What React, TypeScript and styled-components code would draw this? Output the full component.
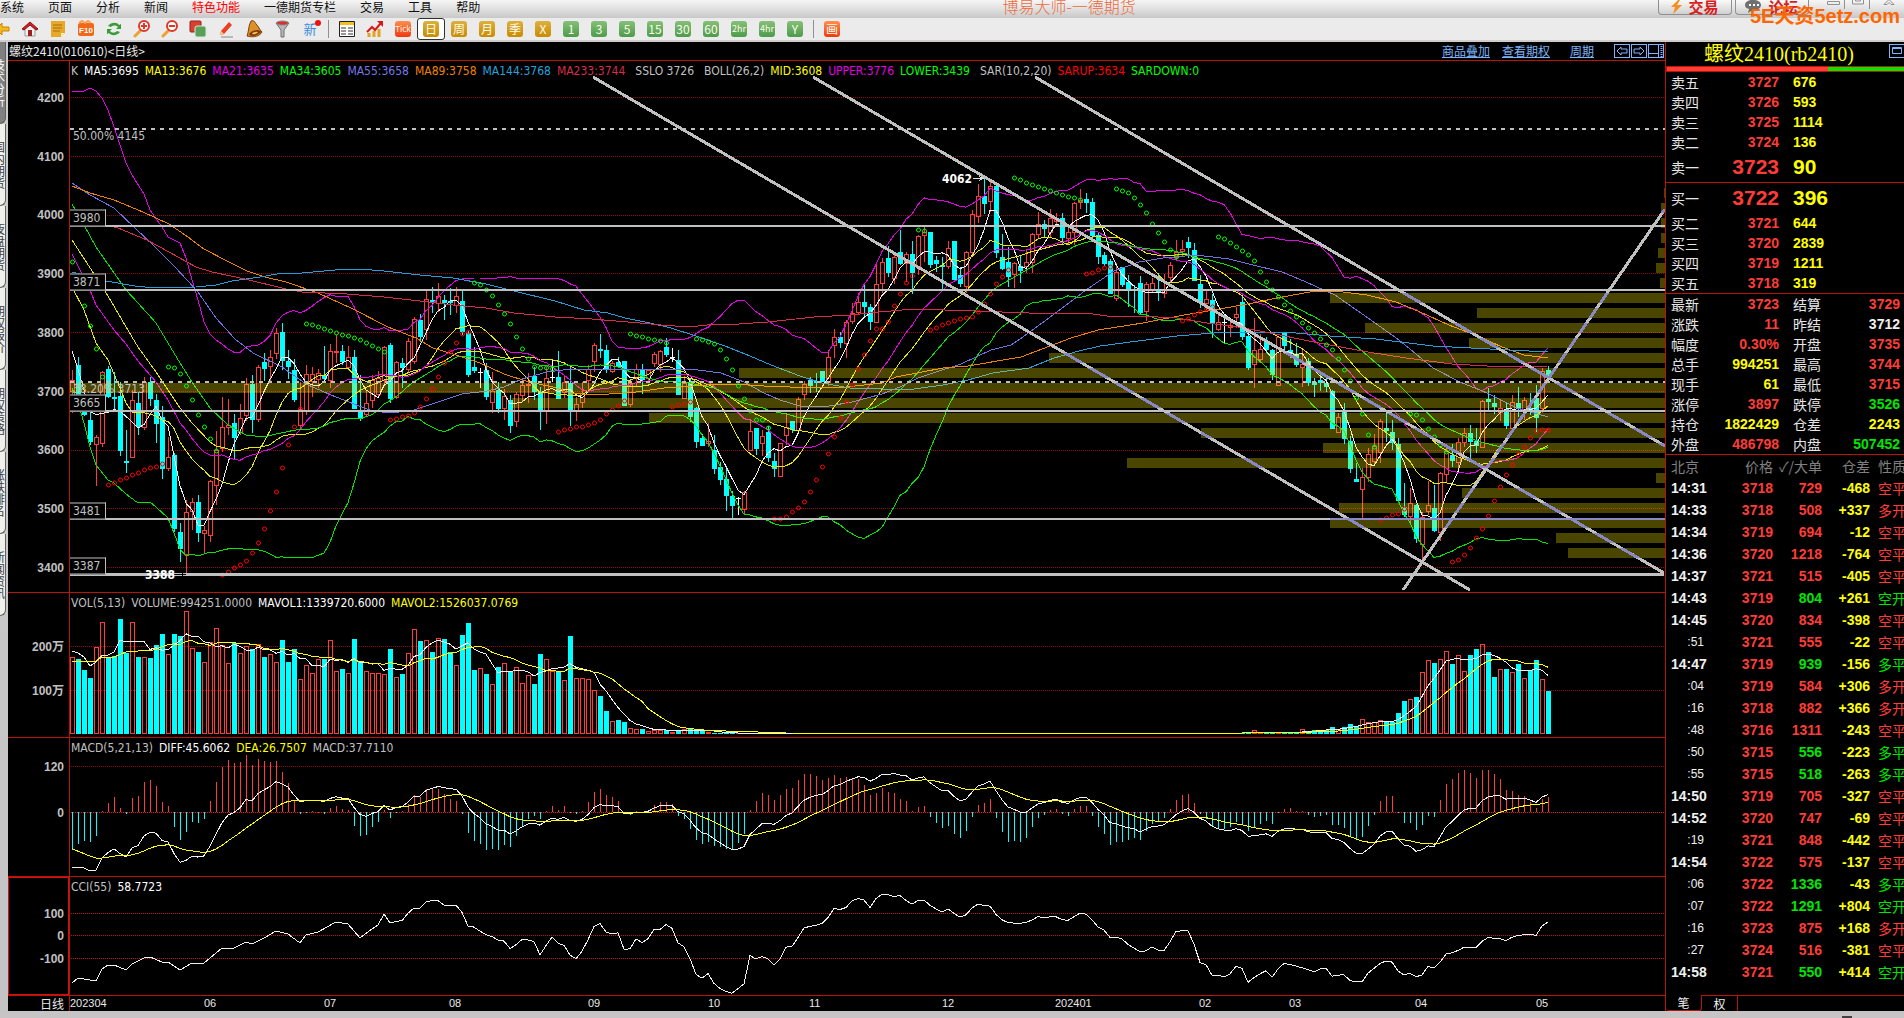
import React from "react";
import styled, { createGlobalStyle, css } from "styled-components";

/* ---------- palette and type ---------- */
const RED = "#ff3c38";
const LINE = "#b81408";
const YELLOW = "#ffff00";
const GREEN = "#00e600";
const SILVER = "#c0c0c0";
const CYAN = "#00ffff";
const MAGENTA = "#e600e6";
const CN = `"Noto Sans CJK SC", sans-serif`;
const CHART = `"DejaVu Sans Condensed", "DejaVu Sans", "Noto Sans CJK SC", sans-serif`;
const NUM = `"Liberation Sans", "Noto Sans CJK SC", sans-serif`;

const GlobalStyle = createGlobalStyle`
  * { box-sizing: border-box; }
  body { margin: 0; background: #000; overflow: hidden; }
  button { margin: 0; padding: 0; border: 0; background: none; font: inherit; color: inherit; }
`;

/* ---------- market data (vertical chart units) ---------- */
type Candle = { kind: string; high: number; top: number; bottom: number; low: number };

const RAW = `
r370,380,391,413 c357,365,400,404 c396,400,415,416 c412,420,442,445 r435,437,444,486 r371,372,443,447 c366,369,397,398 c372,397,399,412
c382,396,451,456 c430,461,463,473 r390,400,457,458 c392,403,427,435 r377,382,427,430 c377,382,399,406 c394,400,424,443 c406,417,469,479
r437,457,468,471 c453,455,529,532 c523,532,549,562 r500,512,554,573 r498,502,511,530 c495,502,533,542 r526,530,533,554 r480,481,535,542
r431,450,485,505 r397,427,448,452 r399,425,427,435 c414,423,438,459 r404,418,432,435 r378,384,415,421 c375,384,420,433 r365,367,419,422
c353,362,369,381 r350,357,366,381 r328,333,353,359 c323,332,361,370 c350,361,367,379 c359,370,400,402 r382,409,425,429 r365,374,411,415
r367,374,381,397 r369,373,379,388 c346,375,379,383 r344,351,380,388 r335,351,352,363 c345,351,362,365 r346,357,367,370 c350,357,409,409
c375,411,419,421 r390,403,414,416 r375,380,400,408 r371,378,394,396 r346,347,380,385 c343,345,399,403 r361,362,397,399 c358,363,368,388
r338,341,369,372 r317,319,361,364 c314,320,337,342 r290,299,329,340 c287,300,303,313 r283,296,303,312 c295,300,303,320 c288,301,303,315
r287,296,305,313 c290,301,332,335 c331,333,375,377 c347,367,371,373 w368,372,373,388 c363,370,397,400 r372,391,402,413 c382,390,409,413
r389,396,408,420 c395,400,426,433 r392,394,421,427 r380,385,395,401 r373,384,385,403 c367,376,392,400 c387,392,411,430 r367,378,410,424
w359,377,378,382 c351,377,399,399 r375,382,392,398 c365,383,411,426 r397,404,411,421 r382,393,402,408 r365,369,380,392 r343,345,361,372
c334,349,351,358 c345,350,369,373 r361,363,371,373 c357,362,367,368 c361,361,406,406 r379,383,404,407 r364,369,378,387 c364,369,380,394
r369,370,378,380 r352,354,363,367 r350,351,364,372 c338,347,355,357 w348,357,358,362 c350,360,395,395 r376,383,398,399 c378,382,417,422
c407,408,442,448 c434,438,446,446 r423,441,443,447 c435,450,469,474 c462,467,480,485 c466,479,496,511 c491,496,506,518 w497,498,499,515
r491,492,509,515 r419,431,450,451 c428,428,449,455 r430,436,443,456 c426,432,458,462 c453,461,469,477 r443,443,476,476 r413,427,435,445
c421,421,430,433 r397,399,430,431 r381,384,394,400 c377,380,386,393 c373,381,383,392 c371,371,382,382 r350,357,382,386 r329,337,345,358
c332,337,343,348 r320,322,343,358 r303,313,321,324 r293,302,312,315 c283,302,307,318 c304,307,322,330 r263,284,322,322 r258,262,283,293
c246,258,273,277 r253,257,278,284 c230,252,264,265 r252,254,263,282 c241,254,273,294 r235,236,267,275 r227,232,235,262 c232,232,265,268
c256,260,264,272 c257,265,267,290 r241,248,266,269 c241,241,280,282 c267,275,284,287 r251,252,286,293 r210,214,252,257 r184,196,216,223
c178,196,204,214 r182,186,201,212 c185,186,253,258 c234,257,269,270 c247,262,277,287 r262,263,274,288 c256,266,271,283 r250,262,266,273
r233,234,262,273 r212,224,234,238 c220,224,229,237 r209,218,232,237 r213,218,221,227 c213,218,238,244 r227,232,238,245 r202,203,232,245
r189,200,202,209 c193,199,203,213 c198,202,236,241 c233,235,257,264 c252,255,264,266 c259,261,294,294 r263,272,298,301 c267,267,285,287
c275,282,289,307 c285,289,291,313 c276,283,313,314 r282,284,311,321 r278,283,289,293 c273,289,292,301 r274,290,293,298 r262,265,277,283
r240,252,257,260 r240,249,251,257 c237,242,248,258 c243,250,281,281 c275,284,303,308 r289,299,303,310 c294,300,323,338 r313,322,329,331
w318,322,323,344 r320,325,327,337 r307,314,317,328 c293,302,337,340 c330,336,368,370 r318,350,364,388 r334,349,359,363 c337,342,350,353
c349,350,375,380 r337,337,385,385 c333,333,346,350 c339,350,353,358 c343,354,365,367 r350,364,367,387 c358,361,383,386 c378,382,385,397
c374,380,383,391 c377,383,387,392 c390,391,429,429 r413,417,432,433 c403,411,439,444 c436,441,469,473 c463,479,482,482 r468,477,489,520
r448,454,477,482 r434,446,461,466 r419,421,452,463 c413,428,431,442 c420,432,443,450 c438,444,501,503 c483,507,515,517 r488,503,516,523
c504,505,539,543 r512,517,544,563 r481,505,511,515 c485,508,531,532 r472,473,532,541 r448,451,474,483 c444,455,461,467 r438,442,462,470
r428,433,442,447 c425,433,442,460 c428,441,446,453 r400,401,447,448 c388,399,402,410 c395,403,407,414 r400,408,412,421 c403,409,426,429
r395,402,428,429 c387,403,409,417 r397,400,411,420 c393,408,411,415 c385,398,418,432 r368,371,408,413 c366,370,375,378`;

const candles: Candle[] = RAW.trim().split(/\s+/).map((t) => {
  const [high, top, bottom, low] = t.slice(1).split(",").map(Number);
  return { kind: t[0], high, top, bottom, low };
});
const closes = candles.map((c) => (c.kind === "r" ? c.top : c.bottom));
const cx = (i: number) => 72 + i * 6;

const VOL_HEAD = [
  77, 75, 64, 56, 87, 112, 76, 78, 115, 81, 112, 77, 77, 76, 89, 100, 80, 100, 98, 123, 86, 82, 72, 92, 106, 89, 71, 91, 81, 88, 85, 90, 77,
  80, 72, 94, 72, 85, 55, 69, 61, 75, 75, 94, 63, 65, 61, 95, 72, 63, 61, 61, 60, 85, 57, 60, 81, 105, 93, 94, 82, 96, 95, 82, 69, 99, 111, 64,
  66, 60, 50, 67, 71, 63, 67, 51, 59, 50, 80, 75, 63, 62, 54, 98, 56, 56, 55, 44, 38, 23, 13, 14, 12, 6, 5, 5, 3, 4, 4, 4, 2, 3, 5, 5, 4, 3, 2,
];
const VOL_TAIL = [
  2, 4, 1, 1, 1, 1, 2, 1, 1, 5, 3, 4, 4, 4, 7, 5, 7, 10, 8, 15, 12, 12, 14, 12, 12, 21, 33, 35, 37, 62, 74, 71, 75, 83, 70, 79, 63, 79, 85, 90,
  82, 57, 65, 65, 62, 70, 56, 64, 74, 55, 43,
];
const volumes = candles.map((_, i) =>
  i < VOL_HEAD.length ? VOL_HEAD[i] : i >= candles.length - VOL_TAIL.length ? VOL_TAIL[i - candles.length + VOL_TAIL.length] : 1
);

/* ---------- indicators ---------- */
const lerp = (knots: number[][], i: number) => {
  for (let k = 1; k < knots.length; k++) {
    const [a, ya] = knots[k - 1];
    const [b, yb] = knots[k];
    if (i <= b) return ya + ((yb - ya) * (i - a)) / (b - a);
  }
  return knots[knots.length - 1][1];
};
const mean = (a: number[]) => a.reduce((s, v) => s + v, 0) / a.length;
const windowed = (src: number[], n: number, head: number[][], f: (w: number[]) => number) =>
  src.map((_, i) => (i < n - 1 ? lerp(head, i) : f(src.slice(i - n + 1, i + 1))));
const deviation = (w: number[]) => {
  const m = mean(w);
  return Math.sqrt(mean(w.map((v) => (v - m) ** 2)));
};
const path = (ys: number[]) => ys.map((y, i) => `${cx(i)},${y.toFixed(1)}`).join(" ");

const ma5 = windowed(closes, 5, [[0, 351], [1, 369], [2, 390], [3, 411]], mean);
const ma13 = windowed(closes, 13, [[0, 287], [2, 310], [4, 343], [6, 360], [8, 388], [9, 403], [10, 412], [11, 413]], mean);
const ma21 = windowed(closes, 21, [[0, 254], [3, 290], [4, 305], [7, 330], [9, 344], [11, 361], [14, 382], [16, 400], [18, 423], [19, 430]], mean);
const ma34 = windowed(
  closes, 34,
  [[0, 204], [2, 225], [4, 247], [9, 290], [11, 303], [14, 323], [16, 343], [18, 363], [20, 382], [23, 408], [26, 425], [29, 435], [32, 437]],
  mean
);
const mid = windowed(
  closes, 26,
  [[0, 240], [4, 277], [6, 296], [10, 337], [11, 347], [14, 372], [16, 390], [18, 408], [20, 423], [23, 442], [24, 446]],
  mean
);
const upper = windowed(
  closes, 26,
  [[0, 91], [2, 91], [3, 88], [4, 91], [5, 98], [6, 110], [7, 127], [9, 163], [10, 175], [12, 194], [13, 210], [15, 227], [16, 237], [18, 243],
    [19, 258], [20, 280], [21, 300], [22, 322], [23, 334], [24, 340]],
  (w) => mean(w) - 2 * deviation(w)
);
const lower = windowed(
  closes, 26,
  [[0, 388], [1, 403], [2, 423], [3, 447], [4, 465], [6, 480], [7, 483], [9, 494], [11, 503], [13, 502], [14, 507], [16, 518], [17, 533],
    [18, 549], [19, 556], [20, 554], [21, 556], [23, 552], [24, 552]],
  (w) => mean(w) + 2 * deviation(w)
);
const MA55 =
  "72,183 90,195 114,208 135,228 155,247 175,267 198,292 216,318 235,339 253,353 282,367 306,384 331,395 354,404 372,411 392,413 414,410 438,402 462,394 487,391 504,387 522,379 547,372 571,369 600,369 667,369 690,369 721,373 744,382 764,393 780,400 800,406 829,406 852,402 882,394 900,387 918,378 936,372 961,364 991,350 1011,345 1020,339 1053,315 1086,290 1114,271 1139,262 1163,258 1196,255 1229,259 1253,265 1282,272 1306,282 1335,295 1368,318 1399,340 1433,368 1460,382 1487,393 1517,408 1548,417";
const MA89 =
  "72,186 90,193 114,200 143,212 169,224 188,237 204,249 229,262 247,271 265,277 286,282 318,293 351,308 388,327 416,338 433,348 456,355 480,363 504,374 529,382 553,387 571,393 595,395 636,392 664,388 707,385 732,384 764,386 816,388 846,387 882,383 896,377 943,368 968,366 1021,357 1050,346 1071,338 1098,330 1143,323 1184,315 1220,309 1253,303 1282,297 1310,292 1335,291 1367,295 1396,302 1420,312 1449,325 1480,337 1502,347 1524,355 1548,358";
const MA144 =
  "72,272 106,281 135,286 155,288 196,287 216,285 232,281 260,277 277,274 302,273 335,270 359,269 384,271 420,275 453,278 486,284 514,291 555,301 584,310 608,313 625,318 650,323 671,328 696,336 725,346 750,356 771,365 800,376 822,383 850,388 882,389 914,389 943,385 968,380 993,373 1029,368 1054,358 1079,351 1100,346 1138,341 1177,336 1226,332 1284,332 1330,336 1376,339 1433,346 1490,349 1548,352";
const MA233 =
  "72,215 102,224 118,228 147,240 169,252 196,267 212,272 245,279 286,289 302,292 347,294 384,297 420,301 453,305 486,308 514,313 555,317 592,319 640,323 661,325 689,327 707,325 739,324 768,322 814,317 850,315 879,312 914,309 975,311 1029,313 1086,313 1114,317 1138,316 1177,318 1207,323 1238,327 1265,332 1314,342 1368,352 1406,358 1452,364 1487,366 1506,367 1548,366";

const SAR: { from: number; up?: boolean; ys: number[] }[] = [
  { from: 0, ys: [262, 283, 306, 326, 349, 377] },
  { from: 6, up: true, ys: [485, 483, 480, 478, 475, 473, 470, 468, 467, 464] },
  { from: 16, ys: [367, 368, 374, 386, 400, 415, 427, 439, 451] },
  { from: 25, up: true, ys: [575, 572, 568, 565, 561, 553, 543, 529, 511, 492, 468, 445, 427, 409] },
  { from: 39, ys: [324, 325, 327, 329, 331, 333, 335, 336, 338, 340, 343, 346, 349, 352] },
  { from: 53, up: true, ys: [420, 419, 417, 416, 413, 407, 399, 389, 377, 363, 352, 343, 334, 332] },
  { from: 67, ys: [283, 285, 290, 296, 305, 314, 324, 337, 349, 359, 367, 368, 368, 369] },
  { from: 81, up: true, ys: [432, 430, 429, 427, 427, 425, 423, 420, 414, 410, 406, 401] },
  { from: 93, ys: [334, 336, 337, 339, 340, 341, 343] },
  { from: 100, up: true, ys: [407, 405, 404, 402] },
  { from: 104, ys: [339, 340, 342, 344, 350, 359, 370, 386, 399, 411, 420, 420, 428] },
  { from: 117, up: true, ys: [519, 519, 517, 512, 508, 502, 492, 480, 467, 454, 437, 418, 402, 385, 369, 355, 341, 329, 329, 322, 306, 294, 283, 276] },
  { from: 141, ys: [230, 231] },
  { from: 143, up: true, ys: [330, 328, 325, 323, 321, 319, 318, 317, 312, 304, 294, 284, 277, 270] },
  { from: 157, ys: [178, 180, 183, 185, 187, 189, 191, 193, 195, 197, 198, 200] },
  { from: 169, up: true, ys: [274, 273, 270, 268, 267] },
  { from: 174, ys: [189, 191, 193, 198, 205, 213, 224, 233, 242, 250, 257] },
  { from: 185, up: true, ys: [321, 319, 315, 312, 309, 307] },
  { from: 191, ys: [237, 239, 243, 247, 251, 255, 261, 272, 282, 290, 297, 305, 311, 317, 323, 328, 333, 339, 345, 350, 359, 370, 381, 398, 414, 435, 447] },
  { from: 218, up: true, ys: [520, 518, 515, 514, 509] },
  { from: 223, ys: [414, 415, 420, 429, 437, 445, 452] },
  { from: 230, up: true, ys: [562, 560, 555, 548, 538, 529, 516, 501, 487, 475, 465, 455, 447, 438, 431, 430, 430] },
];

const PROFILE = [
  [188, 1664], [203, 1661], [218, 1661], [233, 1661], [248, 1658], [263, 1656], [278, 1660], [293, 1330], [308, 1477], [323, 1365], [338, 1469],
  [353, 1049], [368, 739], [383, 70], [398, 512], [413, 649], [428, 1201], [443, 1323], [458, 1127], [473, 1656], [488, 1462], [503, 1339],
  [518, 1330], [533, 1556], [548, 1568],
];

const mavol1 = windowed(volumes, 5, [[0, 83], [1, 81], [2, 77], [3, 68]], mean).map((h) => 734 - h);
const mavol2 = windowed(volumes, 13, [[0, 73], [4, 73], [5, 77], [7, 77], [9, 82], [11, 83]], mean).map((h) => 734 - h);

const macd = (() => {
  let fast = 369, slow = 285, dea = -36;
  return closes.map((c, i) => {
    if (i > 0) {
      fast += (c - fast) / 3;
      slow += (c - slow) / 11;
    }
    const diff = (slow - fast) * 0.653;
    if (i > 0) dea += (diff - dea) / 7;
    return { diff, dea, bar: 2 * (diff - dea) };
  });
})();

const typical = candles.map((c, i) => (c.high + c.low + closes[i]) / 3);
const cci = windowed(
  typical, 55,
  [[0, 983], [1, 978], [4, 981], [5, 969], [6, 965], [7, 965], [9, 970], [10, 964], [12, 958], [13, 957], [15, 962], [16, 962], [18, 970],
    [20, 963], [22, 963], [23, 958], [25, 948], [27, 948], [29, 942], [30, 944], [32, 938], [34, 931], [36, 934], [38, 943], [39, 935],
    [41, 932], [44, 922], [46, 924], [48, 938], [50, 929], [51, 925], [52, 914], [53, 923]],
  (w) => {
    const m = mean(w);
    return 936 - (((m - w[w.length - 1]) / (0.015 * mean(w.map((v) => Math.abs(v - m))))) * 22.5) / 100;
  }
);

/* ---------- page frame ---------- */
const Page = styled.div`
  display: flex;
  flex-direction: column;
  height: 100vh;
  overflow: hidden;
  font: 12px ${CN};
  background: linear-gradient(#d0cccc, #c4c4c4);
`;
const TopBar = styled.header`
  display: flex;
  justify-content: space-between;
  height: 18px;
  background: linear-gradient(#f6f6f6, #e0e0e0 50%, #c8c8c8);
`;
const MenuList = styled.nav`
  display: flex;
  flex: none;
  gap: 24px;
`;
const MenuItem = styled.button<{ $hot?: boolean }>`
  height: 14px;
  font: 12px/14px ${CN};
  color: ${(p) => (p.$hot ? "#ff0000" : "#101010")};
`;
const AppTitle = styled.h1`
  flex: 1;
  margin: 0;
  font: 300 16px/12px ${CN};
  color: #ec6a3c;
  text-align: center;
`;
const WindowArea = styled.div`
  position: relative;
  display: flex;
  flex: none;
  gap: 3px;
  width: 246px;
`;
const PillButton = styled.button`
  display: flex;
  align-items: center;
  justify-content: center;
  gap: 6px;
  width: 74px;
  height: 15px;
  border: 1px solid #909090;
  border-top: 0;
  border-radius: 0 0 4px 4px;
  background: linear-gradient(#fafafa, #d0d0d0);
  font: bold 15px/10px ${CN};
  color: #d82020;
`;
const WindowControls = styled.div`
  display: flex;
  padding-left: 10px;
  svg { display: block; }
`;
const Watermark = styled.strong`
  position: absolute;
  z-index: 2;
  top: 6px;
  right: 4px;
  font: bold 20px/20px "Liberation Sans", ${CN};
  color: #ff6600;
  white-space: nowrap;
`;

const Tools = styled.div`
  display: flex;
  align-items: stretch;
  height: 24px;
  margin-left: -12px;
  background: #ebebeb;
  border-bottom: 2px solid #d0cccc;
`;
const Tool = styled.button<{ $active?: boolean }>`
  display: flex;
  align-items: center;
  justify-content: center;
  flex: none;
  width: 28px;
  height: 22px;
  ${(p) => p.$active && css`
    background: #fff;
    border: 1px solid #303030;
    border-radius: 3px;
  `}
`;
const TILES: Record<string, string> = {
  gold: "linear-gradient(#dcb040, #c88c00)",
  green: "linear-gradient(#86c078, #4c9c4c)",
  red: "linear-gradient(#ff9050, #f03810)",
};
const Tile = styled.span<{ $tone: string; $size?: number }>`
  width: 16px;
  height: 16px;
  border-radius: 3px;
  background: ${(p) => TILES[p.$tone]};
  color: #fffbe8;
  font: ${(p) => p.$size || 12}px/16px ${CN};
  text-align: center;
  white-space: nowrap;
`;
const ToolRule = styled.span`
  width: 1px;
  height: 18px;
  margin: 2px 4px 0;
  background: #909090;
`;
const NewMark = styled.span`
  position: relative;
  font: 13px/16px ${CN};
  color: #3c8ce0;
  &::after {
    content: "";
    position: absolute;
    top: -1px;
    right: -4px;
    width: 6px;
    height: 6px;
    border-radius: 50%;
    background: #f01010;
  }
`;

const Body = styled.div`
  display: flex;
  flex: 1;
  min-height: 0;
`;
const SideTabs = styled.nav`
  flex: none;
  width: 8px;
  padding-right: 2px;
  overflow: hidden;
`;
const SideTab = styled.button<{ $active?: boolean }>`
  display: flex;
  justify-content: flex-end;
  align-items: center;
  width: 6px;
  height: 82px;
  border-right: 1px solid #606060;
  border-bottom: 1px solid #606060;
  border-bottom-right-radius: 6px;
  background: ${(p) => (p.$active ? "#808080" : "#f0f0ec")};
  color: ${(p) => (p.$active ? "#fff" : "#404040")};
  font: 12px/12px ${CN};
  span { width: 12px; flex: none; word-break: break-all; }
`;

/* ---------- chart column ---------- */
const Charts = styled.main`
  display: grid;
  grid-template-rows: 19px 532fr 145fr 139fr 119fr 15px;
  flex: 1;
  min-width: 0;
  background: #000;
`;
const ChartHead = styled.div`
  display: flex;
  align-items: center;
  gap: 12px;
  padding: 0 1px;
  border-bottom: 1px solid ${LINE};
  color: #e8e8e8;
  line-height: 16px;
`;
const Symbol = styled.h2`
  flex: 1;
  margin: 0;
  font: 12px/16px ${CN};
`;
const HeadLink = styled.a<{ $apart?: boolean }>`
  margin-left: ${(p) => (p.$apart ? 8 : 0)}px;
  color: #7cb4f8;
  text-decoration: underline;
`;
const HeadButtons = styled.div`
  display: flex;
  gap: 1px;
  margin-left: 8px;
`;
const BoxButton = styled.button`
  width: 16px;
  height: 14px;
  border: 1px solid #80b4ff;
  svg { display: block; width: 14px; height: 12px; }
`;
const Pane = styled.section`
  display: grid;
  grid-template-columns: 62px 1fr;
  min-height: 0;
  border-bottom: 1px solid ${LINE};
`;
const Axis = styled.div<{ $selected?: boolean }>`
  position: relative;
  border-right: 1px solid ${LINE};
  ${(p) => p.$selected && css`box-shadow: inset 0 0 0 1px #d41010;`}
`;
const AxisLabel = styled.span`
  position: absolute;
  right: 5px;
  transform: translateY(-50%);
  font: bold 12px/14px ${NUM};
  color: ${SILVER};
`;
const Plot = styled.div`
  position: relative;
  min-width: 0;
  min-height: 0;
  overflow: hidden;
`;
const Drawing = styled.svg`
  position: absolute;
  inset: 0;
  display: block;
  width: 100%;
  height: 100%;
`;
const Legend = styled.div`
  position: absolute;
  top: 3px;
  left: 1px;
  display: flex;
  gap: 6px;
  font: 12px/14px ${CHART};
  white-space: nowrap;
`;
const Key = styled.span<{ $tone: string; $lead?: boolean }>`
  color: ${(p) => p.$tone};
  margin-left: ${(p) => (p.$lead ? 4 : 0)}px;
`;
const LevelTag = styled.span<{ $boxed?: boolean; $bright?: boolean }>`
  position: absolute;
  transform: translateY(-50%);
  font: 12px/15px ${CHART};
  color: ${(p) => (p.$bright ? "#fff" : SILVER)};
  font-weight: ${(p) => (p.$bright ? "bold" : "normal")};
  white-space: nowrap;
  ${(p) => p.$boxed && css`
    padding: 0 3px;
    width: 36px;
    border: 1px solid ${SILVER};
    border-left: 0;
    background: #000;
  `}
`;
const TimeRow = styled.div`
  display: grid;
  grid-template-columns: 62px 1fr;
  color: #e8e8e8;
  font: 11px/15px ${NUM};
`;
const Period = styled.span`
  padding-right: 5px;
  border-right: 1px solid ${LINE};
  font: 12px/15px ${CN};
  text-align: right;
`;
const Months = styled.div`
  position: relative;
`;
const Month = styled.span`
  position: absolute;
`;

/* ---------- quote panel ---------- */
const Quote = styled.aside`
  display: flex;
  flex-direction: column;
  flex: none;
  width: 239px;
  border-left: 1px solid ${LINE};
  background: #000;
  overflow: hidden;
`;
const QuoteHead = styled.div`
  display: flex;
  align-items: flex-start;
  justify-content: center;
  position: relative;
  height: 24px;
  padding-right: 12px;
`;
const QuoteTitle = styled.h2`
  margin: 0;
  font: 20px/24px "Liberation Serif", ${CN};
  color: ${YELLOW};
`;
const Corner = styled.div`
  position: absolute;
  right: -1px;
  top: 1px;
`;
const Strength = styled.div`
  display: flex;
  flex: none;
  height: 6px;
  border: solid ${LINE};
  border-width: 1px 0 1px 1px;
  background: ${GREEN};
  &::before { content: ""; width: 68%; background: ${RED}; }
`;
const Table = styled.table`
  width: 238px;
  table-layout: fixed;
  border-collapse: separate;
  border-spacing: 0;
  border-bottom: 1px solid ${LINE};
  font: bold 14px/18px ${NUM};
`;
const Row = styled.tr<{ $tall?: boolean }>`
  height: ${(p) => (p.$tall ? 30 : 20)}px;
  td { font-size: ${(p) => (p.$tall ? 21 : 14)}px; }
`;
const RowName = styled.th<{ $inset?: boolean }>`
  padding: 0 0 0 ${(p) => (p.$inset ? 14 : 5)}px;
  font: 14px/18px ${CN};
  color: #e6e6e6;
  text-align: left;
  white-space: nowrap;
`;
const Value = styled.td<{ $tone: string; $left?: boolean; $end?: boolean }>`
  padding: 0 ${(p) => (p.$end ? 4 : 0)}px 0 ${(p) => (p.$left ? 14 : 0)}px;
  color: ${(p) => p.$tone};
  text-align: ${(p) => (p.$left ? "left" : "right")};
`;
const Ticks = styled.table`
  width: 244px;
  table-layout: fixed;
  border-collapse: separate;
  border-spacing: 0;
  font: bold 14px/20px ${NUM};
  tr { height: 22px; }
  td, th { padding: 0; text-align: right; white-space: nowrap; }
  th { font: 14px/20px ${CN}; color: #808080; }
  td:first-child, th:first-child { padding-left: 5px; text-align: left; }
  td:last-child, th:last-child { padding-left: 8px; text-align: left; font: 14px/20px ${CN}; }
`;
const Cell = styled.td<{ $tone: string }>`
  color: ${(p) => p.$tone};
`;
const Seconds = styled.span`
  display: block;
  padding-right: 6px;
  font: 12px/20px ${NUM};
  text-align: right;
`;
const BottomTabs = styled.div`
  display: flex;
  flex: none;
  height: 16px;
  margin-top: auto;
`;
const BottomTab = styled.button<{ $active?: boolean }>`
  width: 36px;
  border: 1px solid ${LINE};
  border-width: ${(p) => (p.$active ? "0 1px 1px 0" : "1px 1px 0 0")};
  border-radius: ${(p) => (p.$active ? "0 0 3px 3px" : "0")};
  font: 12px/14px ${CN};
  color: #f0f0f0;
`;
const BottomRest = styled.span`
  flex: 1;
  border-top: 1px solid ${LINE};
`;
const StatusBar = styled.footer`
  display: flex;
  flex: none;
  justify-content: flex-end;
  align-items: flex-end;
  height: 7px;
  padding-right: 52px;
  background: #c6c4c4;
  &::after { content: ""; width: 10px; height: 2px; background: #404040; }
`;

/* ---------- content ---------- */
const MENU = ["系统", "页面", "分析", "新闻", "特色功能", "一德期货专栏", "交易", "工具", "帮助"];
const SIDE = ["技术分析", "国内期货", "夜盘期货", "期权报价", "期权策略", "涨跌排名", "新闻资讯"];
const PERIODS: [string, string, number?][] = [
  ["周", "gold"], ["月", "gold"], ["季", "gold"], ["X", "gold"], ["1", "green"], ["3", "green"], ["5", "green"], ["15", "green"],
  ["30", "green"], ["60", "green"], ["2hr", "green", 9], ["4hr", "green", 9], ["Y", "green"],
];
const LEGEND: [string, string, boolean?][] = [
  ["K", SILVER], ["MA5:3695", "#fff"], ["MA13:3676", YELLOW], ["MA21:3635", MAGENTA], ["MA34:3605", "#00ff00"], ["MA55:3658", "#7878e8"],
  ["MA89:3758", "#f08000"], ["MA144:3768", "#28a0dc"], ["MA233:3744", "#d82c4c"], ["SSLO 3726", SILVER, true], ["BOLL(26,2)", SILVER, true],
  ["MID:3608", YELLOW], ["UPPER:3776", MAGENTA], ["LOWER:3439", "#00ff00"], ["SAR(10,2,20)", SILVER, true], ["SARUP:3634", "#ff0000"],
  ["SARDOWN:0", "#00ff00"],
];
const MONTHS: [number, string][] = [
  [70, "202304"], [204, "06"], [324, "07"], [449, "08"], [588, "09"], [708, "10"], [809, "11"], [942, "12"], [1055, "202401"], [1199, "02"],
  [1289, "03"], [1415, "04"], [1536, "05"],
];
const ASKS = [["卖五", "3727", "676"], ["卖四", "3726", "593"], ["卖三", "3725", "1114"], ["卖二", "3724", "136"], ["卖一", "3723", "90"]];
const BIDS = [["买一", "3722", "396"], ["买二", "3721", "644"], ["买三", "3720", "2839"], ["买四", "3719", "1211"], ["买五", "3718", "319"]];
const STATS = [
  ["最新", "3723", RED, "结算", "3729", RED], ["涨跌", "11", RED, "昨结", "3712", "#f0f0f0"], ["幅度", "0.30%", RED, "开盘", "3735", RED],
  ["总手", "994251", YELLOW, "最高", "3744", RED], ["现手", "61", YELLOW, "最低", "3715", RED], ["涨停", "3897", RED, "跌停", "3526", GREEN],
  ["持仓", "1822429", YELLOW, "仓差", "2243", YELLOW], ["外盘", "486798", RED, "内盘", "507452", GREEN],
];
const TICKS = `14:31 3718 729 -468 空平|14:33 3718 508 +337 多开|14:34 3719 694 -12 空平|14:36 3720 1218 -764 空平|14:37 3721 515 -405 空平|14:43 3719 804 +261 空开 g|14:45 3720 834 -398 空平|:51 3721 555 -22 空平|14:47 3719 939 -156 多平 g|:04 3719 584 +306 多开|:16 3718 882 +366 多开|:48 3716 1311 -243 空平|:50 3715 556 -223 多平 g|:55 3715 518 -263 多平 g|14:50 3719 705 -327 空平|14:52 3720 747 -69 空平|:19 3721 848 -442 空平|14:54 3722 575 -137 空平|:06 3722 1336 -43 多平 g|:07 3722 1291 +804 空开 g|:16 3723 875 +168 多开|:27 3724 516 -381 空平|14:58 3721 550 +414 空开 g`
  .split("|").map((r) => r.split(" "));

const X0 = 70, W = 1595;
const pctX = (x: number) => `${((x - X0) / W) * 100}%`;

/* ---------- toolbar pictures ---------- */
const Glyph = ({ children }: { children: React.ReactNode }) => (
  <svg width="18" height="18" viewBox="0 0 18 18" fill="none" aria-hidden="true">{children}</svg>
);
const ICONS: [string, React.ReactNode][] = [
  ["后退", <path d="M3 9l6-6v4h7v4H9v4z" fill="#f4b81c" stroke="#c88400" />],
  ["首页", <><path d="M4 9v7h10V9" fill="#f2f2f2" stroke="#999" /><path d="M1 9l8-7 8 7-2 1-6-5-6 5z" fill="#d02020" stroke="#8c1010" /><path d="M7 10h4v6H7z" fill="#a02020" /></>],
  ["便笺", <><path d="M2 1h14v12l-4 4H2z" fill="#e8a828" /><path d="M4 5h9M4 8h9M4 11h7" stroke="#a86c08" /><path d="M12 17v-4h4z" fill="#fff0c0" /></>],
  ["F10", <><rect x="1" y="3" width="16" height="13" rx="2" fill="#f06818" /><path d="M2 3l3-2 3 2 3-2 3 2" stroke="#f8a050" strokeWidth="2" /><text x="9" y="13" fontSize="8" fontWeight="bold" fontFamily="Liberation Sans, sans-serif" textAnchor="middle" fill="#fff">F10</text></>],
  ["刷新", <path d="M3 6c3-4 9-4 11-1l2-1v5h-5l2-2c-2-2-5-2-7 0zM15 12c-3 4-9 4-11 1l-2 1V9h5l-2 2c2 2 5 2 7 0z" fill="#3a9c38" />],
  ["放大", <><path d="M7 11l-5 5" stroke="#f0a030" strokeWidth="3" strokeLinecap="round" /><circle cx="11" cy="6" r="5" fill="#fff" stroke="#e03828" strokeWidth="2" /><path d="M8 6h6M11 3v6" stroke="#e03828" strokeWidth="2" /></>],
  ["缩小", <><path d="M7 11l-5 5" stroke="#f0a030" strokeWidth="3" strokeLinecap="round" /><circle cx="11" cy="6" r="5" fill="#fff" stroke="#e03828" strokeWidth="2" /><path d="M8 6h6" stroke="#e03828" strokeWidth="2" /></>],
  ["窗口", <><rect x="1" y="1" width="11" height="11" rx="1" fill="#d84030" stroke="#982018" /><rect x="6" y="6" width="11" height="11" rx="2" fill="#58a058" stroke="#d8e8d8" /></>],
  ["画线", <><path d="M4 11l8-9 3 3-8 9-4 1z" fill="#e84020" /><path d="M4 11l3 3-4 1z" fill="#f8d090" /><path d="M4 17h12" stroke="#888" /></>],
  ["预警", <><path d="M6 1c3-1 4 1 5 3 3 3 3 5 6 8-2 4-8 6-15 4 2-5 1-9 4-15z" fill="#dc9028" stroke="#804008" /><ellipse cx="10" cy="13" rx="6" ry="2.500" transform="rotate(-16 10 13)" fill="#803808" /><ellipse cx="10" cy="13" rx="3" ry="1" transform="rotate(-16 10 13)" fill="#f0c060" /></>],
  ["筛选", <><path d="M3 3l5 7v7h3v-7l5-7z" fill="#b8b8b8" stroke="#707070" /><ellipse cx="9.500" cy="3" rx="6" ry="2" fill="#d83030" stroke="#888" /></>],
];

/* ---------- drawings ---------- */
const Grid = ({ ys, tone = "#900808" }: { ys: number[]; tone?: string }) => (
  <g stroke={tone} strokeDasharray="1 1">
    {ys.map((y) => <line key={y} x1="71" x2="1665" y1={y + 0.5} y2={y + 0.5} />)}
  </g>
);
const Curve = ({ pts, tone }: { pts: string; tone: string }) => <polyline points={pts} fill="none" stroke={tone} />;

const TRENDS = [[593, 77, 1470, 590], [813, 77, 1664, 573], [1035, 77, 1665, 446], [1403, 590, 1665, 209]];
const Trends = ({ tone }: { tone: string }) => (
  <g stroke={tone} strokeWidth="3">
    {TRENDS.map(([a, b, c, d]) => <line key={a} x1={a} y1={b} x2={c} y2={d} />)}
  </g>
);

function PriceDrawing() {
  return (
    <Drawing viewBox="70 61 1595 531" preserveAspectRatio="none" shapeRendering="crispEdges" role="img" aria-label="螺纹2410 日K线">
      <defs>
        <clipPath id="profile">
          {PROFILE.map(([y, x]) => <rect key={y} x={x} y={y} width={1665 - x} height="10" />)}
        </clipPath>
      </defs>
      <Grid ys={[97, 156, 215, 273, 332, 391, 450, 508, 567]} />
      {candles.map((c, i) => {
        const x = cx(i);
        if (c.kind === "r")
          return (
            <g key={i} stroke={RED} fill="none">
              <path d={`M${x + 0.5} ${c.high}V${c.top}M${x + 0.5} ${c.bottom}V${c.low}`} />
              <rect x={x - 1.5} y={c.top + 0.5} width="4" height={Math.max(1, c.bottom - c.top)} />
            </g>
          );
        const tone = c.kind === "w" ? "#fff" : CYAN;
        return (
          <g key={i} fill={tone}>
            <rect x={x} y={c.high} width="1" height={c.low - c.high} />
            <rect x={x - 2} y={c.top} width="5" height={Math.max(1, c.bottom - c.top)} />
          </g>
        );
      })}
      <Curve pts={path(ma5)} tone="#f0f0f0" />
      <Curve pts={path(ma13)} tone="#e8e800" />
      <Curve pts={path(mid)} tone="#e8e800" />
      <Curve pts={path(ma21)} tone={MAGENTA} />
      <Curve pts={path(upper)} tone={MAGENTA} />
      <Curve pts={path(ma34)} tone={GREEN} />
      <Curve pts={path(lower)} tone={GREEN} />
      <Curve pts={MA55} tone="#7070e0" />
      <Curve pts={MA89} tone="#f08000" />
      <Curve pts={MA144} tone="#289cd8" />
      <Curve pts={MA233} tone="#d82c4c" />
      {PROFILE.map(([y, x]) => <rect key={y} x={x} y={y} width={1665 - x} height="10" fill="#fff000" fillOpacity="0.29" />)}
      <g fill="none" shapeRendering="auto">
        {SAR.flatMap((run) =>
          run.ys.map((y, k) => <ellipse key={`${run.from}-${k}`} cx={cx(run.from + k) + 0.5} cy={y} rx="2" ry="2" stroke={run.up ? "#ff0000" : "#00ff00"} />)
        )}
      </g>
      <g stroke={SILVER} strokeWidth="2">
        {[226, 290, 411, 519].map((y) => <line key={y} x1="70" x2="1665" y1={y} y2={y} />)}
        <line x1="70" x2="1664" y1="574.500" y2="574.500" strokeWidth="3" />
        <path d="M70 129H1665M70 382H1665" strokeDasharray="4 5" />
      </g>
      <Trends tone={SILVER} />
      <g clipPath="url(#profile)">
        <Trends tone="#8888c4" />
        <line x1="1330" x2="1665" y1="519" y2="519" stroke="#8888c4" strokeWidth="2" />
      </g>
      <path d="M973 178.500H983M979 176.500L983 178.500L979 180.500" stroke="#e0e0e0" fill="none" />
      <path d="M174 574.500H186M182 571.500V577.500" stroke="#000" fill="none" />
    </Drawing>
  );
}

function VolumeDrawing() {
  return (
    <Drawing viewBox="70 593 1595 144" preserveAspectRatio="none" shapeRendering="crispEdges" role="img" aria-label="成交量">
      <Grid ys={[646, 690]} />
      {volumes.map((h, i) =>
        candles[i].kind === "c" || h < 2 ? (
          <rect key={i} x={cx(i) - 2} y={734 - h} width="5" height={h} fill={candles[i].kind === "c" ? CYAN : RED} />
        ) : (
          <rect key={i} x={cx(i) - 1.5} y={734.5 - h} width="4" height={h - 1} fill="none" stroke={RED} />
        )
      )}
      <Curve pts={path(mavol1)} tone="#f0f0f0" />
      <Curve pts={path(mavol2)} tone={YELLOW} />
    </Drawing>
  );
}

function MacdDrawing() {
  return (
    <Drawing viewBox="70 738 1595 138" preserveAspectRatio="none" shapeRendering="crispEdges" role="img" aria-label="MACD">
      <Grid ys={[766]} />
      <Grid ys={[812]} tone="#e01818" />
      {macd.map(({ bar }, i) => (
        <rect key={i} x={cx(i)} y={bar > 0 ? 812 - bar : 812} width="1" height={Math.max(1, Math.abs(bar))} fill={bar > 0 ? RED : CYAN} />
      ))}
      <Curve pts={path(macd.map((m) => 812.5 - m.diff))} tone="#f0f0f0" />
      <Curve pts={path(macd.map((m) => 812.5 - m.dea))} tone={YELLOW} />
    </Drawing>
  );
}

function CciDrawing() {
  return (
    <Drawing viewBox="70 877 1595 118" preserveAspectRatio="none" shapeRendering="crispEdges" role="img" aria-label="CCI">
      <Grid ys={[913, 935, 958]} tone="#c01414" />
      <Curve pts={path(cci)} tone="#f0f0f0" />
    </Drawing>
  );
}

type PaneProps = { top: number; height: number; labels: [number, string][]; selected?: boolean; children: React.ReactNode };
const ChartPane = ({ top, height, labels, selected, children }: PaneProps) => (
  <Pane>
    <Axis $selected={selected}>
      {labels.map(([y, t]) => <AxisLabel key={t} style={{ top: `${((y - top) / height) * 100}%` }}>{t}</AxisLabel>)}
    </Axis>
    <Plot>{children}</Plot>
  </Pane>
);
const tagAt = (x: number, y: number) => ({ left: pctX(x), top: `${((y - 61) / 531) * 100}%` });

const Book = ({ rows, best, label }: { rows: string[][]; best: number; label: string }) => (
  <Table aria-label={label}>
    <colgroup><col width="40" /><col width="73" /><col /></colgroup>
    <tbody>
      {rows.map(([name, price, lots], i) => (
        <Row key={name} $tall={i === best}>
          <RowName scope="row">{name}</RowName>
          <Value $tone={RED}>{price}</Value>
          <Value $tone={YELLOW} $left>{lots}</Value>
        </Row>
      ))}
    </tbody>
  </Table>
);

export default function App() {
  return (
    <Page>
      <GlobalStyle />
      <TopBar>
        <MenuList>
          {MENU.map((m) => <MenuItem key={m} $hot={m === "特色功能"}>{m}</MenuItem>)}
        </MenuList>
        <AppTitle>博易大师-一德期货</AppTitle>
        <WindowArea>
          <PillButton>
            <svg width="11" height="14" viewBox="0 0 11 14" aria-hidden="true"><path d="M7 0L0 7h4l-2 7 9-9H6l3-5z" fill="#f49020" /></svg>
            交易
          </PillButton>
          <PillButton>
            <svg width="17" height="14" viewBox="0 0 17 14" aria-hidden="true">
              <path d="M8 0c5 0 8 2 8 5s-3 5-8 5l-5 3 1-4C1 8 0 7 0 5c0-3 3-5 8-5z" fill="#707070" />
              <path d="M4 5h2M8 5h2M12 5h2" stroke="#fff" strokeWidth="2" />
            </svg>
            论坛
          </PillButton>
          <WindowControls>
            <svg width="78" height="9" viewBox="0 0 78 9" fill="none" stroke="#909090" aria-hidden="true">
              <path d="M5.500 1.500h12v3h-12zM22.500 0v9M30.500 -1v5h11v-5M33.500 -1v2h5v-2M47.500 0v9M62 4.500l5-5 5 5h-3l-2-2-2 2z" />
            </svg>
          </WindowControls>
          <Watermark>5E天资5etz.com</Watermark>
        </WindowArea>
      </TopBar>
      <Tools>
        {ICONS.map(([name, art]) => <Tool key={name} aria-label={name}><Glyph>{art}</Glyph></Tool>)}
        <Tool><NewMark>新</NewMark></Tool>
        <ToolRule />
        <Tool aria-label="报价">
          <Glyph>
            <path d="M1.500 1.500h15v15h-15z" fill="#fff" stroke="#202020" />
            <path d="M2 3.500h14" stroke="#f0c020" strokeWidth="3" />
            <path d="M3 8h5M10 8h5M3 11h5M10 11h5M3 14h5M10 14h5" stroke="#303030" />
          </Glyph>
        </Tool>
        <Tool aria-label="走势">
          <Glyph>
            <path d="M3 17v-4M8 17v-6M13 17V9" stroke="#e8a020" strokeWidth="3" />
            <path d="M1 12l5-5 3 3 6-7" stroke="#d81818" strokeWidth="2" />
            <path d="M11 1h6v6z" fill="#d81818" />
          </Glyph>
        </Tool>
        <Tool><Tile $tone="red" $size={8}>Tick</Tile></Tool>
        <Tool $active aria-pressed="true"><Tile $tone="gold">日</Tile></Tool>
        {PERIODS.map(([t, tone, size]) => <Tool key={t}><Tile $tone={tone} $size={size}>{t}</Tile></Tool>)}
        <ToolRule />
        <Tool><Tile $tone="red">画</Tile></Tool>
      </Tools>
      <Body>
        <SideTabs>
          {SIDE.map((s, i) => <SideTab key={s} $active={i === 0}><span>{s}</span></SideTab>)}
        </SideTabs>
        <Charts>
          <ChartHead>
            <Symbol>螺纹2410(010610)&lt;日线&gt;</Symbol>
            <HeadLink href="#overlay">商品叠加</HeadLink>
            <HeadLink href="#options">查看期权</HeadLink>
            <HeadLink href="#period" $apart>周期</HeadLink>
            <HeadButtons>
              <BoxButton aria-label="向左"><svg viewBox="0 0 14 12" fill="none" stroke="#80b4ff"><path d="M2 6l4-4v2h6v4H6v2z" /></svg></BoxButton>
              <BoxButton aria-label="向右"><svg viewBox="0 0 14 12" fill="none" stroke="#80b4ff"><path d="M12 6l-4-4v2H2v4h6v2z" /></svg></BoxButton>
              <BoxButton aria-label="分栏"><svg viewBox="0 0 14 12" fill="none" stroke="#80b4ff"><path d="M0 8.500h9M9.500 0v12" /><path d="M12.500 1v11" strokeDasharray="1 1" strokeWidth="2" /></svg></BoxButton>
            </HeadButtons>
          </ChartHead>

          <ChartPane top={61} height={531} labels={[4200, 4100, 4000, 3900, 3800, 3700, 3600, 3500, 3400].map((p, i) => [98 + Math.round(i * 58.72), String(p)] as [number, string])}>
            <PriceDrawing />
            <Legend>{LEGEND.map(([t, c, lead]) => <Key key={t} $tone={c} $lead={lead}>{t}</Key>)}</Legend>
            <LevelTag style={tagAt(73, 136)}>50.00% 4145</LevelTag>
            <LevelTag style={tagAt(73, 389)}>38.20% 3713</LevelTag>
            <LevelTag $boxed style={tagAt(70, 218)}>3980</LevelTag>
            <LevelTag $boxed style={tagAt(70, 282)}>3871</LevelTag>
            <LevelTag $boxed style={tagAt(70, 403)}>3665</LevelTag>
            <LevelTag $boxed style={tagAt(70, 511)}>3481</LevelTag>
            <LevelTag $boxed style={tagAt(70, 566)}>3387</LevelTag>
            <LevelTag $bright style={tagAt(942, 179)}>4062</LevelTag>
            <LevelTag $bright style={tagAt(145, 575)}>3388</LevelTag>
          </ChartPane>

          <ChartPane top={593} height={144} labels={[[647, "200万"], [691, "100万"]]}>
            <VolumeDrawing />
            <Legend>
              <Key $tone={SILVER}>VOL(5,13)</Key><Key $tone={SILVER}>VOLUME:994251.0000</Key>
              <Key $tone="#fff">MAVOL1:1339720.6000</Key><Key $tone={YELLOW}>MAVOL2:1526037.0769</Key>
            </Legend>
          </ChartPane>

          <ChartPane top={738} height={138} labels={[[767, "120"], [813, "0"]]}>
            <MacdDrawing />
            <Legend>
              <Key $tone={SILVER}>MACD(5,21,13)</Key><Key $tone="#fff">DIFF:45.6062</Key>
              <Key $tone={YELLOW}>DEA:26.7507</Key><Key $tone={SILVER}>MACD:37.7110</Key>
            </Legend>
          </ChartPane>

          <ChartPane top={877} height={118} labels={[[914, "100"], [936, "0"], [959, "-100"]]} selected>
            <CciDrawing />
            <Legend><Key $tone={SILVER}>CCI(55)</Key><Key $tone="#fff">58.7723</Key></Legend>
          </ChartPane>

          <TimeRow>
            <Period>日线</Period>
            <Months>{MONTHS.map(([x, t]) => <Month key={x} style={{ left: pctX(x) }}>{t}</Month>)}</Months>
          </TimeRow>
        </Charts>

        <Quote>
          <QuoteHead>
            <QuoteTitle>螺纹2410(rb2410)</QuoteTitle>
            <Corner>
              <BoxButton aria-label="最大化"><svg viewBox="0 0 14 12" fill="none" stroke="#80b4ff"><path d="M2.500 2.500h9v6h-9zM2 3.500h10" /></svg></BoxButton>
            </Corner>
          </QuoteHead>
          <Strength />
          <Book rows={ASKS} best={4} label="卖盘" />
          <Book rows={BIDS} best={0} label="买盘" />
          <Table aria-label="行情统计">
            <colgroup><col width="40" /><col width="73" /><col width="56" /><col /></colgroup>
            <tbody>
              {STATS.map(([a, av, ac, b, bv, bc]) => (
                <Row key={a}>
                  <RowName scope="row">{a}</RowName>
                  <Value $tone={ac}>{av}</Value>
                  <RowName scope="row" $inset>{b}</RowName>
                  <Value $tone={bc} $end>{bv}</Value>
                </Row>
              ))}
            </tbody>
          </Table>
          <Ticks aria-label="分笔成交">
            <colgroup><col width="44" /><col width="63" /><col width="49" /><col width="48" /><col /></colgroup>
            <thead><tr><th>北京</th><th>价格</th><th>✓/大单</th><th>仓差</th><th>性质</th></tr></thead>
            <tbody>
              {TICKS.map(([time, price, lots, diff, nature, g], i) => {
                const tone = g ? GREEN : RED;
                return (
                  <tr key={i}>
                    <Cell $tone="#f0f0f0">{time[0] === ":" ? <Seconds>{time}</Seconds> : time}</Cell>
                    <Cell $tone={RED}>{price}</Cell>
                    <Cell $tone={tone}>{lots}</Cell>
                    <Cell $tone={YELLOW}>{diff}</Cell>
                    <Cell $tone={tone}>{nature}</Cell>
                  </tr>
                );
              })}
            </tbody>
          </Ticks>
          <BottomTabs>
            <BottomTab $active>笔</BottomTab>
            <BottomTab>权</BottomTab>
            <BottomRest />
          </BottomTabs>
        </Quote>
      </Body>
      <StatusBar />
    </Page>
  );
}
